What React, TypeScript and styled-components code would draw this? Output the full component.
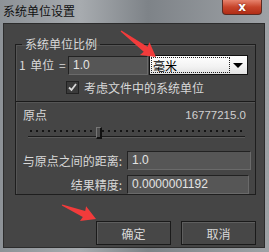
import styled, { createGlobalStyle } from "styled-components";

const Global = createGlobalStyle`
  html, body {
    margin: 0;
    padding: 0;
    background: #6b6f74;
  }
  body {
    font-family: "Noto Sans CJK SC", "Noto Sans", sans-serif;
    font-size: 12px;
  }
`;

const Window = styled.div`
  position: relative;
  width: 269px;
  height: 252px;
  box-sizing: border-box;
  background: linear-gradient(90deg, #8d9297 0%, #a7abaf 30%, #7e8388 55%, #9ea2a6 100%);
  padding: 0 4px 4px 3px;
  display: flex;
  flex-direction: column;
  overflow: hidden;
`;

const TitleBar = styled.div`
  height: 23px;
  display: flex;
  align-items: center;
  justify-content: space-between;
  color: #111;
  font-size: 12px;
  line-height: 1;
`;

const TitleText = styled.span`
  padding-bottom: 2px;
`;

const CloseButton = styled.div`
  align-self: flex-start;
  width: 40px;
  height: 15px;
  margin-right: 3px;
  box-sizing: border-box;
  border: 1px solid #5a2a22;
  border-top: none;
  border-radius: 0 0 4px 4px;
  background: linear-gradient(180deg, #e7836d 0%, #c7452b 50%, #b12d16 100%);
  display: flex;
  align-items: center;
  justify-content: center;
  color: #fff;
  font-family: "DejaVu Sans", sans-serif;
  font-weight: bold;
  font-size: 12px;
  text-shadow: 0 0 2px #5a1a10;
`;

const Body = styled.div`
  flex: 1;
  background: #454545;
  border: 1px solid #2c2c2c;
  color: #d8d8d8;
  display: flex;
  flex-direction: column;
  padding: 13px 8px 0 11px;
`;

const Group = styled.fieldset`
  margin: 0;
  padding: 0;
  height: 158px;
  box-sizing: border-box;
  border: 1px solid #1e1e1e;
  box-shadow: inset 1px 1px 0 #555;
  display: flex;
  flex-direction: column;
`;

const Legend = styled.legend`
  margin-left: 6px;
  padding: 0 3px;
  color: #d8d8d8;
  font-size: 12px;
  line-height: 14px;
`;

const UnitRow = styled.div`
  display: flex;
  align-items: center;
  margin-top: 4px;
  padding-left: 3px;
`;

const Label = styled.span<{ $width?: number; $align?: string }>`
  display: inline-block;
  width: ${(p) => (p.$width ? `${p.$width}px` : "auto")};
  text-align: ${(p) => p.$align ?? "right"};
  white-space: nowrap;
  line-height: 1;
  word-spacing: 2px;
`;

const Field = styled.div<{ $width: number }>`
  width: ${(p) => p.$width}px;
  height: 19px;
  box-sizing: border-box;
  background: #565656;
  border-top: 1px solid #222;
  border-left: 1px solid #222;
  border-right: 1px solid #6a6a6a;
  border-bottom: 1px solid #6a6a6a;
  color: #e4e4e4;
  font-family: "Liberation Sans", "Noto Sans CJK SC", sans-serif;
  font-size: 12px;
  line-height: 17px;
  padding-left: 4px;
`;

const Select = styled.div`
  width: 99px;
  height: 20px;
  box-sizing: border-box;
  margin-left: 1px;
  background: linear-gradient(180deg, #ffffff 0%, #f2f2f2 60%, #e2e2e2 100%);
  border: 1px solid #111;
  display: flex;
  align-items: center;
  color: #000;
  padding: 1px;
`;

const SelectValue = styled.div`
  flex: 1;
  height: 100%;
  box-sizing: border-box;
  border: 1px dotted #222;
  line-height: 15px;
  padding-left: 1px;
`;

const Caret = styled.div`
  width: 16px;
  display: flex;
  justify-content: center;
  &::after {
    content: "";
    border-left: 5px solid transparent;
    border-right: 5px solid transparent;
    border-top: 5px solid #000;
  }
`;

const CheckRow = styled.div`
  display: flex;
  align-items: center;
  gap: 5px;
  margin: 4px 0 0 50px;
  height: 16px;
`;

const Check = styled.div`
  width: 13px;
  height: 13px;
  box-sizing: border-box;
  background: #3a3a3a;
  border: 1px solid #222;
  display: flex;
  align-items: center;
  justify-content: center;
`;

const Divider = styled.div`
  height: 1px;
  background: #1a1a1a;
  margin-top: 6px;
  box-shadow: 0 1px 0 #555;
`;

const OriginRow = styled.div`
  display: flex;
  justify-content: space-between;
  align-items: center;
  padding: 6px 9px 0 7px;
  line-height: 14px;
`;

const Number = styled.span`
  font-family: "Liberation Sans", sans-serif;
  font-size: 11.5px;
  color: #d0d0d0;
`;

const Slider = styled.div`
  position: relative;
  height: 14px;
  margin: 5px 10px 0 12px;
`;

const Dots = styled.div`
  height: 2px;
  margin-top: 3px;
  background-image: radial-gradient(circle, #141414 0.9px, transparent 1.1px);
  background-size: 6px 2px;
  background-repeat: repeat-x;
`;

const Track = styled.div`
  height: 1px;
  margin-top: 4px;
  background: #1c1c1c;
  box-shadow: 0 1px 0 #5a5a5a;
  border-left: 1px solid #1c1c1c;
`;

const Thumb = styled.div`
  position: absolute;
  left: 68px;
  top: 0;
  width: 6px;
  height: 12px;
  box-sizing: border-box;
  background: #4c4c4c;
  border-top: 1px solid #777;
  border-left: 1px solid #777;
  border-right: 2px solid #111;
  border-bottom: 2px solid #111;
`;

const FieldRow = styled.div<{ $top: number }>`
  display: flex;
  align-items: center;
  gap: 5px;
  margin-top: ${(p) => p.$top}px;
  padding-left: 2px;
`;

const Footer = styled.div`
  display: flex;
  justify-content: flex-end;
  gap: 10px;
  padding: 26px 0 0;
`;

const Button = styled.div`
  width: 75px;
  height: 24px;
  box-sizing: border-box;
  background: #474747;
  border: 1px solid #1a1a1a;
  box-shadow: inset 1px 1px 0 #5e5e5e;
  display: flex;
  align-items: center;
  justify-content: center;
  color: #d8d8d8;
  font-size: 12px;
`;

const Annotations = styled.svg`
  position: absolute;
  left: 0;
  top: 0;
  pointer-events: none;
`;

function arrowPoints(x1: number, y1: number, x2: number, y2: number) {
  const dx = x2 - x1;
  const dy = y2 - y1;
  const L = Math.hypot(dx, dy);
  const ux = dx / L;
  const uy = dy / L;
  const nx = -uy;
  const ny = ux;
  const head = 13;
  const local: [number, number][] = [
    [0, -0.6],
    [L - head, -3.2],
    [L - head - 1, -8],
    [L, 0],
    [L - head - 1, 8],
    [L - head, 3.2],
    [0, 0.6],
  ];
  return local
    .map(([a, b]) => `${(x1 + ux * a + nx * b).toFixed(1)},${(y1 + uy * a + ny * b).toFixed(1)}`)
    .join(" ");
}

export default function App() {
  return (
    <>
      <Global />
      <Window>
        <TitleBar>
          <TitleText>系统单位设置</TitleText>
          <CloseButton>x</CloseButton>
        </TitleBar>
        <Body>
          <Group>
            <Legend>系统单位比例</Legend>
            <UnitRow>
              <Label $width={49} $align="left">1 单位 =</Label>
              <Field $width={80}>1.0</Field>
              <Select>
                <SelectValue>毫米</SelectValue>
                <Caret />
              </Select>
            </UnitRow>
            <CheckRow>
              <Check>
                <svg width="11" height="11" viewBox="0 0 11 11">
                  <path d="M2 5.5 L4.5 8 L9 2" stroke="#d8d8d8" strokeWidth="1.8" fill="none" />
                </svg>
              </Check>
              <span>考虑文件中的系统单位</span>
            </CheckRow>
            <Divider />
            <OriginRow>
              <span>原点</span>
              <Number>16777215.0</Number>
            </OriginRow>
            <Slider>
              <Dots />
              <Track />
              <Thumb />
            </Slider>
            <FieldRow $top={10}>
              <Label $width={104}>与原点之间的距离:</Label>
              <Field $width={124}>1.0</Field>
            </FieldRow>
            <FieldRow $top={5}>
              <Label $width={104}>结果精度:</Label>
              <Field $width={122}>0.0000001192</Field>
            </FieldRow>
          </Group>
          <Footer>
            <Button>确定</Button>
            <Button>取消</Button>
          </Footer>
        </Body>
        <Annotations width={269} height={252} viewBox="0 0 269 252">
          <polygon points={arrowPoints(121, 31, 156, 57)} fill="#f23b3b" />
          <polygon points={arrowPoints(62, 205, 96, 219)} fill="#f23b3b" />
        </Annotations>
      </Window>
    </>
  );
}
